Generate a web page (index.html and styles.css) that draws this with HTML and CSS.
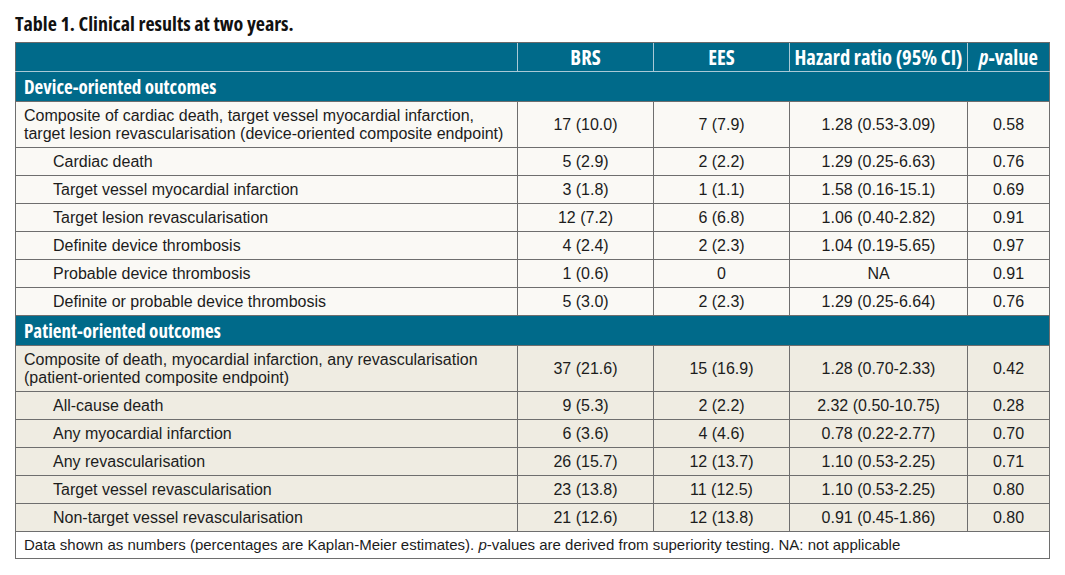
FILE: index.html
```html
<!DOCTYPE html>
<html>
<head>
<meta charset="utf-8">
<link rel="stylesheet" href="styles.css">
</head>
<body>
<div class="page">
  <h1 class="title">Table 1. Clinical results at two years.</h1>
  <table class="results">
    <colgroup>
      <col class="c-label"><col class="c-num"><col class="c-num"><col class="c-hr"><col class="c-p">
    </colgroup>
    <thead>
      <tr class="head">
        <th></th><th>BRS</th><th>EES</th><th>Hazard ratio (95% CI)</th><th><i>p</i>-value</th>
      </tr>
    </thead>
    <tbody class="light">
      <tr class="section"><td colspan="5">Device-oriented outcomes</td></tr>
      <tr class="tall">
        <td class="label">Composite of cardiac death, target vessel myocardial infarction,<br>target lesion revascularisation (device-oriented composite endpoint)</td>
        <td>17 (10.0)</td><td>7 (7.9)</td><td>1.28 (0.53-3.09)</td><td>0.58</td>
      </tr>
      <tr><td class="label sub">Cardiac death</td><td>5 (2.9)</td><td>2 (2.2)</td><td>1.29 (0.25-6.63)</td><td>0.76</td></tr>
      <tr><td class="label sub">Target vessel myocardial infarction</td><td>3 (1.8)</td><td>1 (1.1)</td><td>1.58 (0.16-15.1)</td><td>0.69</td></tr>
      <tr><td class="label sub">Target lesion revascularisation</td><td>12 (7.2)</td><td>6 (6.8)</td><td>1.06 (0.40-2.82)</td><td>0.91</td></tr>
      <tr><td class="label sub">Definite device thrombosis</td><td>4 (2.4)</td><td>2 (2.3)</td><td>1.04 (0.19-5.65)</td><td>0.97</td></tr>
      <tr><td class="label sub">Probable device thrombosis</td><td>1 (0.6)</td><td>0</td><td>NA</td><td>0.91</td></tr>
      <tr><td class="label sub">Definite or probable device thrombosis</td><td>5 (3.0)</td><td>2 (2.3)</td><td>1.29 (0.25-6.64)</td><td>0.76</td></tr>
    </tbody>
    <tbody class="beige">
      <tr class="section"><td colspan="5">Patient-oriented outcomes</td></tr>
      <tr class="tall">
        <td class="label">Composite of death, myocardial infarction, any revascularisation<br>(patient-oriented composite endpoint)</td>
        <td>37 (21.6)</td><td>15 (16.9)</td><td>1.28 (0.70-2.33)</td><td>0.42</td>
      </tr>
      <tr><td class="label sub">All-cause death</td><td>9 (5.3)</td><td>2 (2.2)</td><td>2.32 (0.50-10.75)</td><td>0.28</td></tr>
      <tr><td class="label sub">Any myocardial infarction</td><td>6 (3.6)</td><td>4 (4.6)</td><td>0.78 (0.22-2.77)</td><td>0.70</td></tr>
      <tr><td class="label sub">Any revascularisation</td><td>26 (15.7)</td><td>12 (13.7)</td><td>1.10 (0.53-2.25)</td><td>0.71</td></tr>
      <tr><td class="label sub">Target vessel revascularisation</td><td>23 (13.8)</td><td>11 (12.5)</td><td>1.10 (0.53-2.25)</td><td>0.80</td></tr>
      <tr><td class="label sub">Non-target vessel revascularisation</td><td>21 (12.6)</td><td>12 (13.8)</td><td>0.91 (0.45-1.86)</td><td>0.80</td></tr>
    </tbody>
    <tfoot>
      <tr class="foot"><td colspan="5">Data shown as numbers (percentages are Kaplan-Meier estimates). <i>p</i>-values are derived from superiority testing. NA: not applicable</td></tr>
    </tfoot>
  </table>
</div>
</body>
</html>
```

FILE: styles.css
```css
html, body {
  margin: 0;
  padding: 0;
  background: #ffffff;
}

.page {
  padding: 14px 0 0 15px;
  font-family: "Liberation Sans", Arial, sans-serif;
  color: #1c1c1c;
}

.title {
  margin: 0 0 8px 0;
  font-family: "Open Sans", sans-serif;
  font-stretch: 75%;
  font-weight: 700;
  font-size: 20px;
  line-height: 20px;
  color: #111;
}

.results {
  border-collapse: collapse;
  width: 1035px;
  table-layout: fixed;
  font-size: 16px;
  border: 1px solid #6a6a6a;
}

.c-label { width: 502px; }
.c-num { width: 136px; }
.c-hr { width: 178px; }
.c-p { width: 82px; }

.results td {
  border: 1px solid #6e6e6e;
  height: 27px;
  padding: 0 8px;
  text-align: center;
  vertical-align: middle;
  line-height: 18px;
}

.results td.label {
  text-align: left;
}

.results td.sub {
  padding-left: 37px;
}

.head th {
  background: #006a8a;
  color: #fff;
  font-family: "Open Sans", sans-serif;
  font-stretch: 75%;
  font-weight: 700;
  font-size: 20.5px;
  line-height: 22px;
  height: 28px;
  padding: 0;
  border-left: 1px solid #a9c9d6;
  border-bottom: 1px solid #a9c9d6;
  border-top: 1px solid #6a6a6a;
}

.head th:first-child {
  border-left: 1px solid #6a6a6a;
}

.results .section td {
  background: #006a8a;
  color: #fff;
  font-family: "Open Sans", sans-serif;
  font-stretch: 75%;
  font-weight: 700;
  font-size: 19px;
  text-align: left;
  height: 29px;
}

.light td { background: #faf9f5; }
.beige td { background: #efece2; }

.results .tall td { height: 45px; }

.results .foot td {
  background: #fff;
  text-align: left;
  font-size: 15px;
  height: 26px;
}
```
